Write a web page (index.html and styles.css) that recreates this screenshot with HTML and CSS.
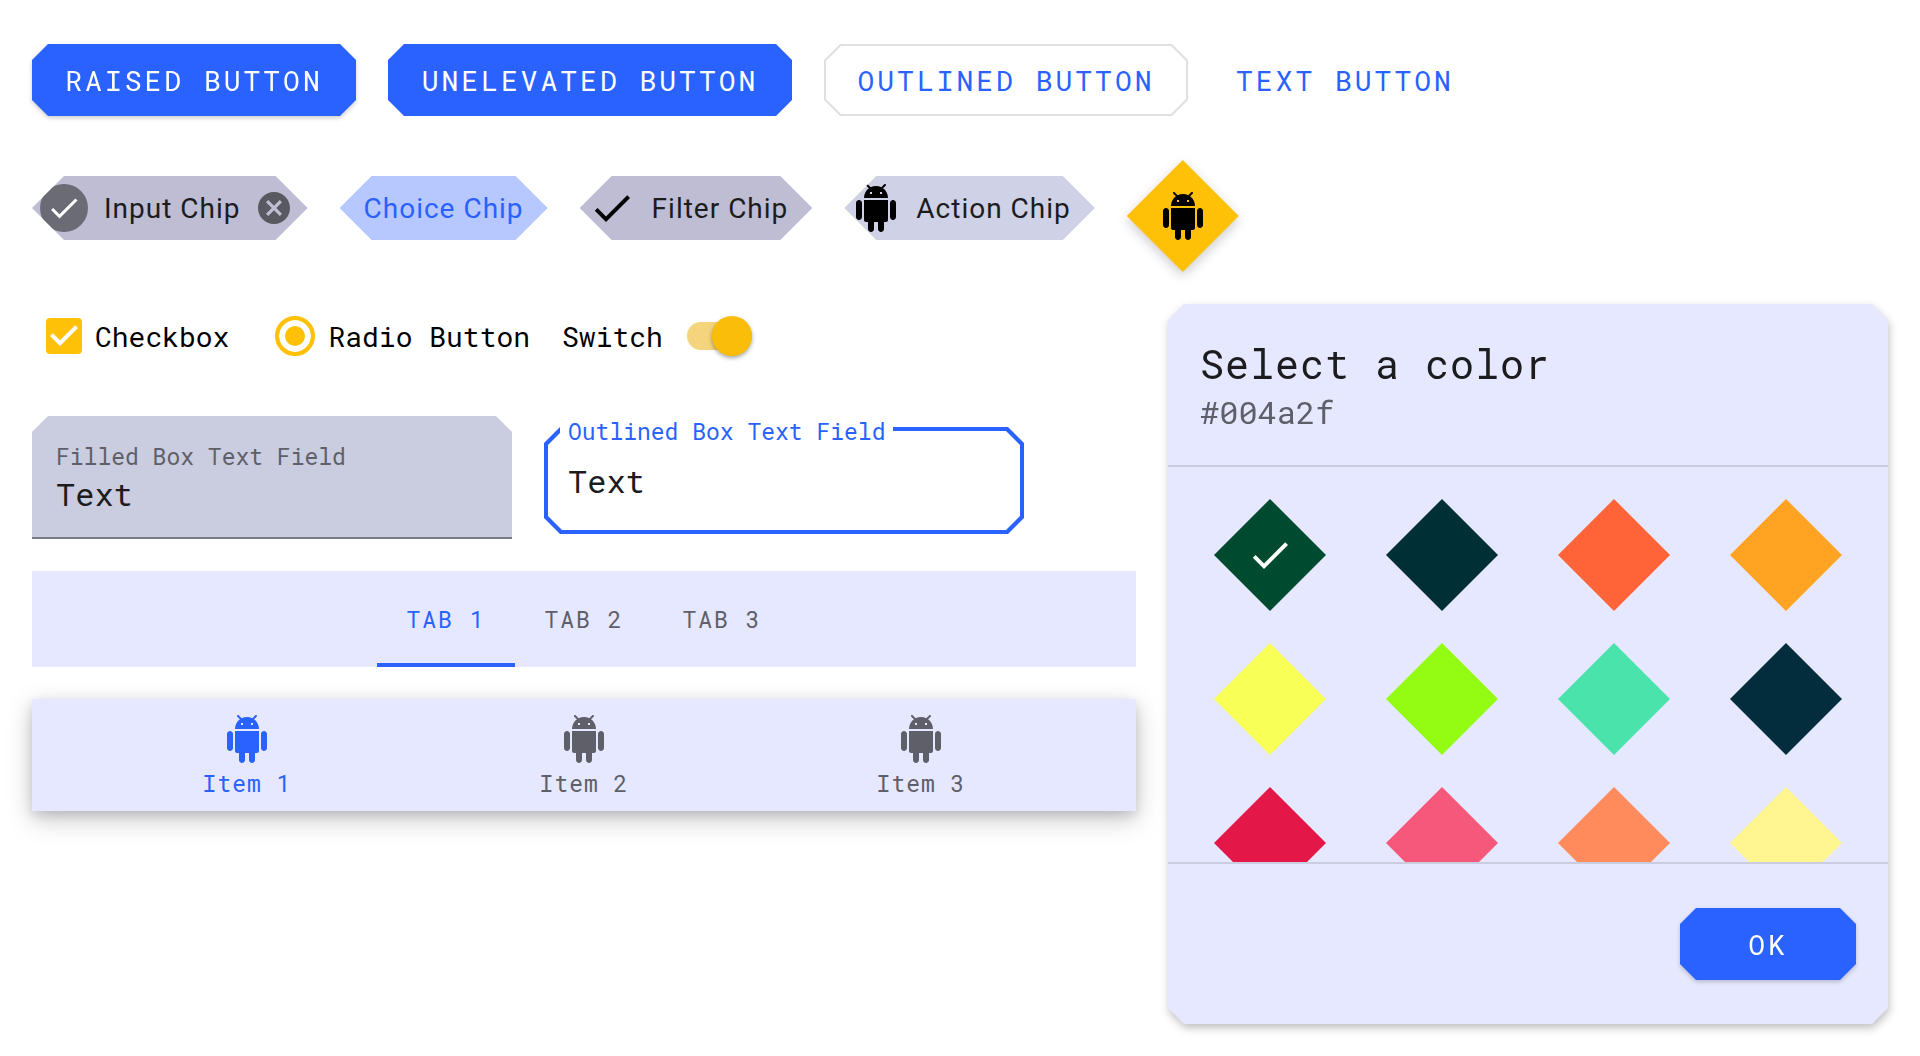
FILE: index.html
```
<!DOCTYPE html>
<html lang="en">
<head>
<meta charset="utf-8">
<meta name="viewport" content="width=device-width, initial-scale=1">
<title>Component theme</title>
<link rel="stylesheet" href="styles.css">
</head>
<body>
<svg class="sprite" aria-hidden="true">
  <symbol id="android" viewBox="0 0 24 24"><path d="M6 18c0 .55.45 1 1 1h1v3.5c0 .83.67 1.5 1.5 1.5s1.5-.67 1.5-1.5V19h2v3.5c0 .83.67 1.5 1.5 1.5s1.5-.67 1.5-1.5V19h1c.55 0 1-.45 1-1V8H6v10zM3.5 8C2.67 8 2 8.67 2 9.5v7c0 .83.67 1.5 1.5 1.5S5 17.33 5 16.5v-7C5 8.67 4.33 8 3.5 8zm17 0c-.83 0-1.5.67-1.5 1.5v7c0 .83.67 1.5 1.5 1.5s1.5-.67 1.5-1.5v-7c0-.83-.67-1.5-1.5-1.5zm-4.97-5.84l1.3-1.3c.2-.2.2-.51 0-.71-.2-.2-.51-.2-.71 0l-1.48 1.48C13.85 1.23 12.95 1 12 1c-.96 0-1.86.23-2.66.63L7.85.15c-.2-.2-.51-.2-.71 0-.2.2-.2.51 0 .71l1.31 1.31C6.97 3.26 6 5.01 6 7h12c0-1.99-.97-3.75-2.47-4.84zM10 5H9V4h1v1zm5 0h-1V4h1v1z"/></symbol>
  <symbol id="check" viewBox="0 0 24 24"><path d="M9 16.2L4.8 12l-1.4 1.4L9 19 21 7l-1.4-1.4L9 16.2z"/></symbol>
  <symbol id="cancel" viewBox="2 2 20 20"><path d="M12 2C6.47 2 2 6.47 2 12s4.47 10 10 10 10-4.47 10-10S17.53 2 12 2zm5 13.59L15.59 17 12 13.41 8.41 17 7 15.59 10.59 12 7 8.41 8.41 7 12 10.59 15.59 7 17 8.41 13.41 12 17 15.59z"/></symbol>
</svg>

<main class="page">
  <section class="row buttons">
    <span class="lift"><button class="btn btn-raised">RAISED BUTTON</button></span>
    <button class="btn btn-unelevated">UNELEVATED BUTTON</button>
    <button class="btn btn-outlined">OUTLINED BUTTON</button>
    <button class="btn btn-text">TEXT BUTTON</button>
  </section>

  <section class="row chips">
    <button class="chip chip-input">
      <span class="avatar"><svg><use href="#check"/></svg></span>Input Chip<svg class="close"><use href="#cancel"/></svg>
    </button>
    <button class="chip chip-choice">Choice Chip</button>
    <button class="chip chip-filter"><svg class="icon"><use href="#check"/></svg>Filter Chip</button>
    <button class="chip chip-action"><svg class="icon"><use href="#android"/></svg>Action Chip</button>
    <span class="fab-lift"><button class="fab" aria-label="Android"><svg class="icon"><use href="#android"/></svg></button></span>
  </section>

  <div class="columns">
    <div class="left">
      <section class="controls">
        <label class="option"><input class="checkbox" type="checkbox" checked>Checkbox</label>
        <label class="option"><input class="radio" type="radio" name="choice" checked>Radio Button</label>
        <label class="option option-switch">Switch<input class="switch" type="checkbox" role="switch" checked></label>
      </section>

      <section class="fields">
        <div class="field-filled">
          <label for="filled">Filled Box Text Field</label>
          <input id="filled" type="text" value="Text">
        </div>
        <div class="field-outlined">
          <label for="outlined">Outlined Box Text Field</label>
          <input id="outlined" type="text" value="Text">
        </div>
      </section>

      <div class="tabs" role="tablist">
        <button class="tab" role="tab" aria-selected="true">TAB 1</button>
        <button class="tab" role="tab" aria-selected="false">TAB 2</button>
        <button class="tab" role="tab" aria-selected="false">TAB 3</button>
      </div>

      <nav class="bottom-nav">
        <a class="nav-item active" href="#item1"><svg class="icon"><use href="#android"/></svg>Item 1</a>
        <a class="nav-item" href="#item2"><svg class="icon"><use href="#android"/></svg>Item 2</a>
        <a class="nav-item" href="#item3"><svg class="icon"><use href="#android"/></svg>Item 3</a>
      </nav>
    </div>

    <div class="dialog-lift">
      <section class="dialog" role="dialog" aria-labelledby="dialog-title">
        <header class="dialog-head">
          <h1 id="dialog-title">Select a color</h1>
          <p>#004a2f</p>
        </header>
        <div class="swatches">
          <button class="swatch" style="background:#004a2f" aria-label="#004a2f"><svg class="icon"><use href="#check"/></svg></button>
          <button class="swatch" style="background:#002f35" aria-label="#002f35"></button>
          <button class="swatch" style="background:#ff6337" aria-label="#ff6337"></button>
          <button class="swatch" style="background:#ffa323" aria-label="#ffa323"></button>
          <button class="swatch" style="background:#f8ff56" aria-label="#f8ff56"></button>
          <button class="swatch" style="background:#94fc13" aria-label="#94fc13"></button>
          <button class="swatch" style="background:#4be3ac" aria-label="#4be3ac"></button>
          <button class="swatch" style="background:#032d3c" aria-label="#032d3c"></button>
          <button class="swatch" style="background:#e41749" aria-label="#e41749"></button>
          <button class="swatch" style="background:#f5587b" aria-label="#f5587b"></button>
          <button class="swatch" style="background:#ff8a5c" aria-label="#ff8a5c"></button>
          <button class="swatch" style="background:#fff591" aria-label="#fff591"></button>
        </div>
        <footer class="dialog-foot">
          <span class="lift"><button class="btn btn-ok">OK</button></span>
        </footer>
      </section>
    </div>
  </div>
</main>
</body>
</html>
```
FILE: styles.css
```
:root {
  --primary: #2962ff;
  --secondary: #ffc107;
  --surface: #e6e8ff;
  --muted: #5f5f69;
  --ink: #1c1c1f;
  --mono: "Roboto Mono", "DejaVu Sans Mono", monospace;
  --diamond: polygon(50% 0, 100% 50%, 50% 100%, 0 50%);
}

* {
  box-sizing: border-box;
}

body {
  margin: 0;
  background: #fff;
  color: #000;
  font-family: var(--mono);
  font-size: 28px;
}

button,
input {
  margin: 0;
  padding: 0;
  border: 0;
  background: none;
  color: inherit;
  font: inherit;
  outline: 0;
}

svg {
  display: block;
  fill: currentColor;
}

.sprite {
  position: absolute;
  width: 0;
  height: 0;
}

.icon {
  flex: none;
  width: 48px;
  height: 48px;
}

.page {
  padding: 44px 32px 32px;
}

.row {
  display: flex;
  align-items: flex-start;
  gap: 32px;
}

/* Cut corners, --c is the size of the cut */
.btn,
.btn-outlined::before,
.field-outlined::before,
.field-outlined::after,
.dialog {
  --c: 16px;
  clip-path: polygon(var(--c) 0, calc(100% - var(--c)) 0, 100% var(--c), 100% calc(100% - var(--c)), calc(100% - var(--c)) 100%, var(--c) 100%, 0 calc(100% - var(--c)), 0 var(--c));
}

/* Buttons */
.btn {
  min-height: 72px;
  padding: 0 32px;
  background: var(--primary);
  color: #fff;
  font-size: 28px;
  letter-spacing: 3px;
  white-space: nowrap;
}

.lift {
  display: block;
  filter: drop-shadow(0 2px 2px rgba(0, 0, 0, .2));
}

.btn-raised {
  min-width: 324px;
}

.btn-unelevated {
  min-width: 404px;
}

.btn-outlined {
  position: relative;
  isolation: isolate;
  min-width: 364px;
  background: #e0e0e0;
  color: var(--primary);
}

.btn-outlined::before {
  --c: 15px;
  content: "";
  position: absolute;
  z-index: -1;
  inset: 2px;
  background: #fff;
}

.btn-text {
  padding: 0 16px;
  background: none;
  color: var(--primary);
}

.btn-ok {
  min-width: 176px;
}

/* Chips */
.chips {
  margin-top: 44px;
}

.chip {
  display: flex;
  align-items: center;
  height: 64px;
  margin-top: 16px;
  clip-path: polygon(32px 0, calc(100% - 32px) 0, 100% 50%, calc(100% - 32px) 100%, 32px 100%, 0 50%);
  color: var(--ink);
  font-family: Roboto, sans-serif;
  font-size: 28px;
  letter-spacing: 1px;
  white-space: nowrap;
}

.chip-input {
  padding: 0 18px 0 8px;
  background: #bebdd3;
}

.avatar {
  display: flex;
  align-items: center;
  justify-content: center;
  width: 48px;
  height: 48px;
  margin-right: 16px;
  border-radius: 50%;
  background: #6b6b76;
  color: #fff;
}

.avatar svg {
  width: 36px;
  height: 36px;
}

.close {
  width: 32px;
  height: 32px;
  margin-left: 17px;
  color: #595962;
}

.chip-choice {
  padding: 0 24px;
  background: #b7c7ff;
  color: var(--primary);
}

.chip-filter,
.chip-action {
  gap: 16px;
  padding: 0 24px 0 8px;
  background: #bebdd3;
}

.chip-action {
  background: #cfd1e6;
}

.chip .icon {
  color: #000;
}

.fab-lift {
  filter: drop-shadow(0 4px 6px rgba(0, 0, 0, .2));
}

.fab {
  display: grid;
  place-items: center;
  width: 112px;
  height: 112px;
  clip-path: var(--diamond);
  background: var(--secondary);
}

/* Two columns below the chips */
.columns {
  display: grid;
  grid-template-columns: minmax(0, 1104fr) minmax(0, 720fr);
  gap: 32px;
  align-items: start;
  margin-top: 32px;
}

.controls {
  display: flex;
  gap: 32px;
  padding-left: 14px;
}

.option {
  display: flex;
  align-items: center;
  gap: 13px;
  height: 64px;
  white-space: nowrap;
}

.option + .option {
  margin-left: 14px;
}

.option.option-switch {
  gap: 24px;
  margin-left: 0;
}

.checkbox {
  appearance: none;
  width: 36px;
  height: 36px;
  border-radius: 4px;
  background: var(--secondary) url("data:image/svg+xml,%3Csvg xmlns='http://www.w3.org/2000/svg' viewBox='3 3 18 18'%3E%3Cpath fill='%23fff' d='M10 17l-5-5 1.41-1.41L10 14.17l7.59-7.59L19 8l-9 9z'/%3E%3C/svg%3E") center / 100%;
}

.radio {
  appearance: none;
  width: 40px;
  height: 40px;
  border: 4px solid var(--secondary);
  border-radius: 50%;
  background: var(--secondary);
  box-shadow: inset 0 0 0 6px #fff;
}

.switch {
  appearance: none;
  display: flex;
  align-items: center;
  justify-content: flex-end;
  width: 65px;
  height: 28px;
  border-radius: 14px;
  background: #f4d57d;
}

.switch::before {
  content: "";
  width: 40px;
  height: 40px;
  border-radius: 50%;
  background: #fabd09;
  box-shadow: 0 2px 4px rgba(0, 0, 0, .35);
}

/* Text fields */
.fields {
  display: flex;
  align-items: flex-start;
  gap: 32px;
  margin-top: 48px;
}

.field-filled,
.field-outlined {
  display: flex;
  flex-direction: column;
  align-items: flex-start;
  flex: 0 1 480px;
  min-width: 0;
}

.field-filled {
  padding: 24px 24px 23px;
  border-bottom: 2px solid #7a7a88;
  background: #caccdf;
  clip-path: polygon(16px 0, calc(100% - 16px) 0, 100% 16px, 100% 100%, 0 100%, 0 16px);
}

.fields label {
  font-size: 23px;
  line-height: 32px;
  white-space: nowrap;
}

.fields input {
  width: 100%;
  height: 42px;
  color: var(--ink);
  font-size: 32px;
}

.field-filled label {
  color: var(--muted);
}

.field-outlined {
  position: relative;
  isolation: isolate;
  height: 107px;
  margin-top: 11px;
  padding: 0 16px;
}

.field-outlined::before,
.field-outlined::after {
  content: "";
  position: absolute;
  z-index: -1;
  inset: 0;
  background: var(--primary);
}

.field-outlined::after {
  --c: 14px;
  inset: 4px;
  background: #fff;
}

.field-outlined label {
  margin-top: -12px;
  padding: 0 8px;
  background: #fff;
  color: var(--primary);
}

.field-outlined input {
  margin-top: 12px;
  padding: 0 8px;
}

/* Tabs */
.tabs {
  display: flex;
  justify-content: center;
  margin-top: 32px;
  background: var(--surface);
}

.tab {
  width: 138px;
  height: 96px;
  border-top: 4px solid transparent;
  border-bottom: 4px solid transparent;
  color: var(--muted);
  font-size: 23px;
  letter-spacing: 2px;
}

.tab[aria-selected="true"] {
  border-bottom-color: var(--primary);
  color: var(--primary);
}

/* Bottom navigation */
.bottom-nav {
  display: flex;
  justify-content: center;
  margin-top: 32px;
  padding: 16px 0 12px;
  background: var(--surface);
  box-shadow: 0 8px 24px rgba(0, 0, 0, .22), 0 4px 10px rgba(0, 0, 0, .12);
}

.nav-item {
  display: flex;
  flex: 0 1 337px;
  flex-direction: column;
  align-items: center;
  gap: 4px;
  color: var(--muted);
  font-size: 23px;
  letter-spacing: 1px;
  line-height: 32px;
  text-decoration: none;
}

.nav-item.active {
  color: var(--primary);
}

/* Dialog */
.dialog-lift {
  filter: drop-shadow(1px 4px 4px rgba(0, 0, 0, .25));
}

.dialog {
  background: var(--surface);
}

.dialog-head {
  padding: 36px 32px 29px;
  border-bottom: 2px solid #caccdf;
}

.dialog-head h1 {
  margin: 0;
  color: var(--ink);
  font-size: 40px;
  font-weight: 400;
  letter-spacing: 1px;
  line-height: 48px;
}

.dialog-head p {
  margin: 0;
  color: var(--muted);
  font-size: 32px;
  line-height: 48px;
}

.swatches {
  display: grid;
  grid-template-columns: repeat(4, 1fr);
  justify-items: center;
  gap: 32px 0;
  height: 395px;
  padding: 32px 16px 0;
  overflow: hidden;
}

.swatch {
  display: grid;
  place-items: center;
  width: 112px;
  height: 112px;
  clip-path: var(--diamond);
  color: #fff;
}

.dialog-foot {
  display: flex;
  justify-content: flex-end;
  padding: 44px 32px;
  border-top: 2px solid #caccdf;
}
```
